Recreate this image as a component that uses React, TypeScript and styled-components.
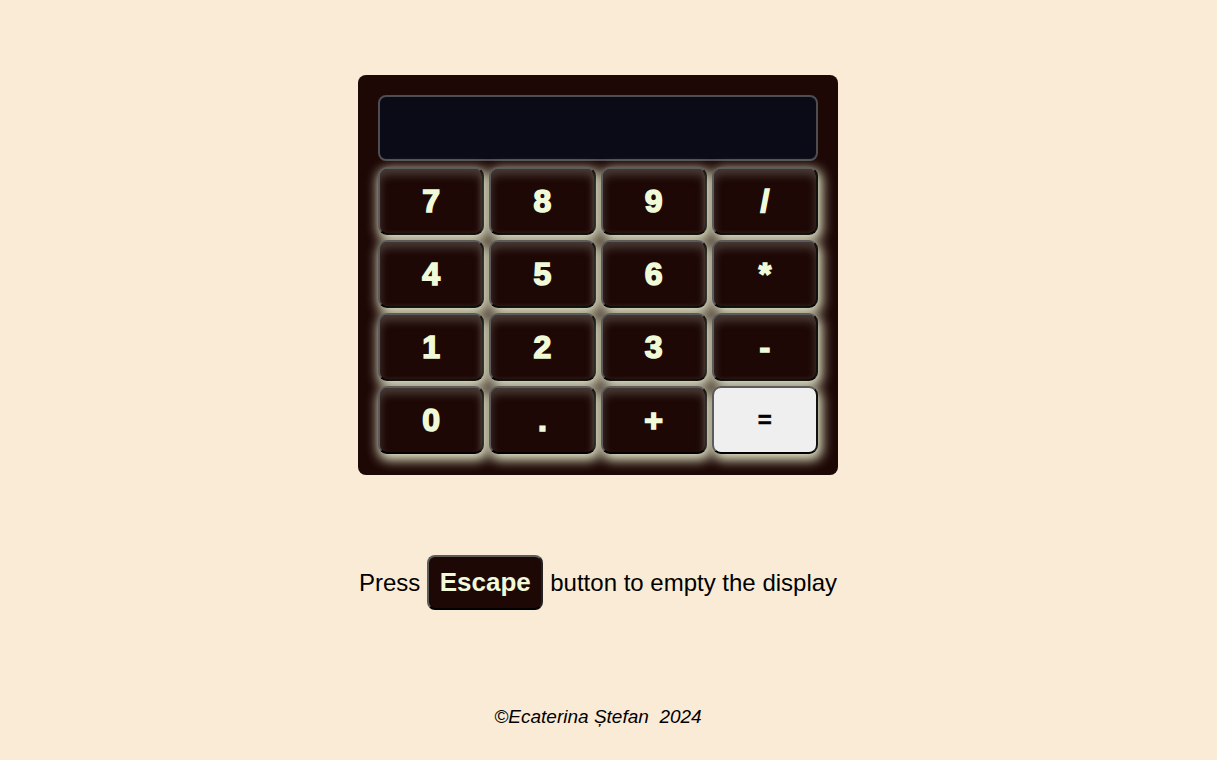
import React from "react";
import styled, { createGlobalStyle } from "styled-components";

const Global = createGlobalStyle`
  html, body { margin: 0; padding: 0; }
  body {
    background: #faebd7;
    font-family: "Liberation Sans", Arial, sans-serif;
    color: #000;
  }
`;

const Page = styled.main`
  display: flex;
  flex-direction: column;
  align-items: center;
  padding: 75px 21px 0 0;
  min-height: 760px;
  box-sizing: border-box;
`;

const Calculator = styled.div`
  width: 480px;
  height: 400px;
  box-sizing: border-box;
  padding: 20px;
  background: #1e0806;
  border-radius: 8px;
  display: flex;
  flex-direction: column;
  gap: 6px;
`;

const Display = styled.div`
  height: 66px;
  flex: none;
  box-sizing: border-box;
  background: #0a0b16;
  border: 2px solid #4e4e52;
  border-radius: 8px;
`;

const Keys = styled.div`
  display: grid;
  grid-template-columns: repeat(4, 1fr);
  grid-template-rows: repeat(4, 68px);
  gap: 5px;
`;

const Key = styled.button<{ $light?: boolean }>`
  box-sizing: border-box;
  border-radius: 9px;
  border: 2px solid;
  border-color: #5c5c5c #111 #000 #5c5c5c;
  background: ${(p) => (p.$light ? "#efefef" : "#1e0806")};
  color: ${(p) => (p.$light ? "#000" : "#f0fad8")};
  font-family: "Liberation Sans", Arial, sans-serif;
  font-weight: bold;
  font-size: ${(p) => (p.$light ? "24px" : "32px")};
  -webkit-text-stroke: ${(p) => (p.$light ? "0.5px #000" : "1.6px #f0fad8")};
  padding: 0;
  display: flex;
  align-items: center;
  justify-content: center;
  box-shadow: ${(p) =>
    p.$light
      ? "2px 4px 12px 2px #e6e9ca"
      : "inset 0 6px 9px rgba(115, 110, 100, 0.5), 2px 4px 12px 2px #e6e9ca"};
`;

const Hint = styled.p`
  margin: 80px 0 0;
  display: flex;
  align-items: center;
  gap: 7px;
  font-size: 24px;
`;

const KeyCap = styled.span`
  display: inline-flex;
  align-items: center;
  justify-content: center;
  width: 116px;
  height: 55px;
  box-sizing: border-box;
  background: #1e0806;
  border: 2px solid;
  border-color: #5c5c5c #222 #000 #5c5c5c;
  border-radius: 8px;
  color: #f0fad8;
  font-weight: bold;
  font-size: 26px;
`;

const Footer = styled.footer`
  margin-top: 96px;
  font-style: italic;
  font-size: 19px;
`;

const keys: { label: string; light?: boolean }[] = [
  { label: "7" }, { label: "8" }, { label: "9" }, { label: "/" },
  { label: "4" }, { label: "5" }, { label: "6" }, { label: "*" },
  { label: "1" }, { label: "2" }, { label: "3" }, { label: "-" },
  { label: "0" }, { label: "." }, { label: "+" }, { label: "=", light: true },
];

export default function App() {
  return (
    <>
      <Global />
      <Page>
        <Calculator>
          <Display />
          <Keys>
            {keys.map((k) => (
              <Key key={k.label} $light={k.light}>
                {k.label}
              </Key>
            ))}
          </Keys>
        </Calculator>
        <Hint>
          Press <KeyCap>Escape</KeyCap> button to empty the display
        </Hint>
        <Footer>©Ecaterina Ștefan&nbsp; 2024</Footer>
      </Page>
    </>
  );
}
